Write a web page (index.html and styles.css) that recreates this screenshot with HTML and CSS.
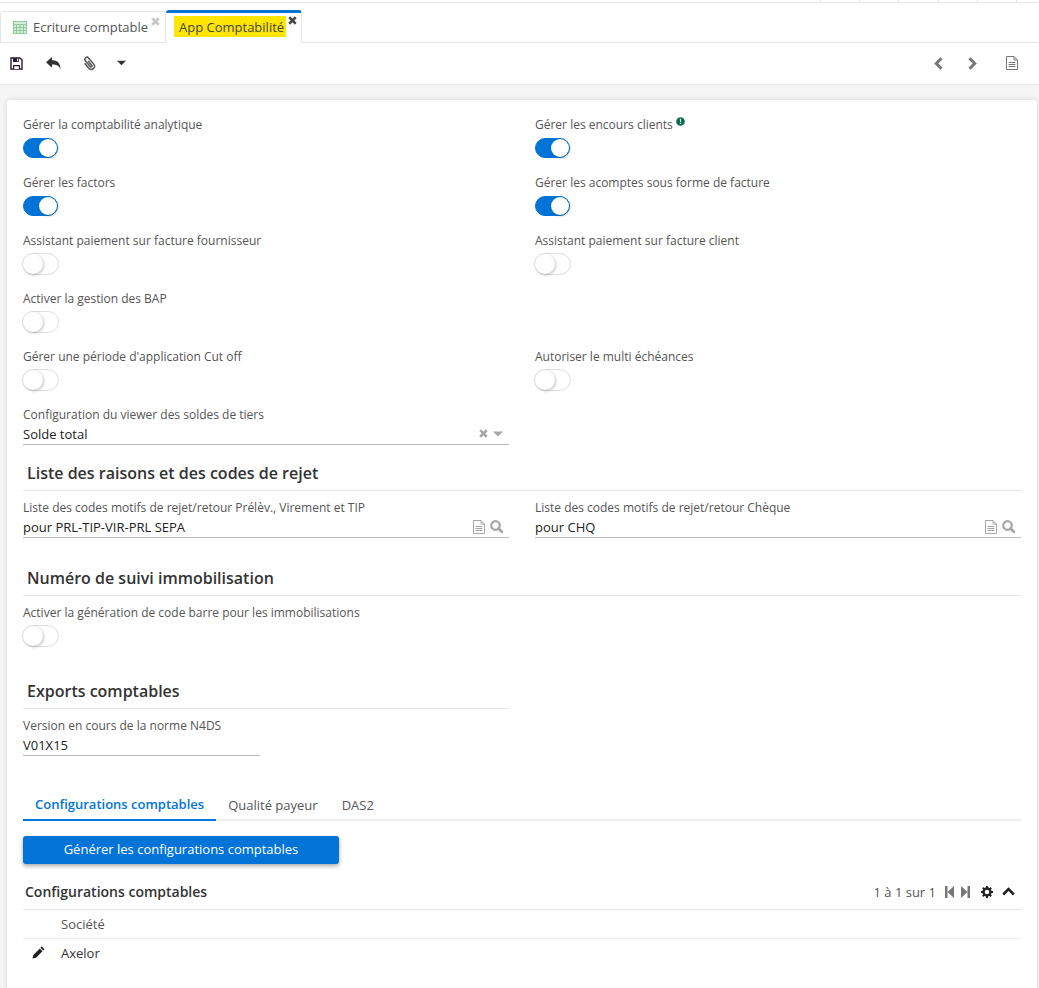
FILE: index.html
```html
<!DOCTYPE html>
<html lang="fr">
<head>
    <meta charset="UTF-8">
    <meta name="viewport" content="width=device-width, initial-scale=1.0">
    <title>App Comptabilité</title>
    <link rel="stylesheet" href="styles.css">
</head>
<body>
    <!-- icon sprite -->
    <svg class="sprite" xmlns="http://www.w3.org/2000/svg">
        <symbol id="i-times" viewBox="0 0 10 10"><path d="M2.400 .4 5 3 7.600 .4 9.600 2.400 7 5l2.600 2.600-2 2L5 7 2.400 9.600l-2-2L3 5 .4 2.400z"/></symbol>
        <symbol id="i-caret" viewBox="0 0 10 6"><path d="M0 .5h10L5 5.500z"/></symbol>
        <symbol id="i-file" viewBox="0 0 12 14"><path fill="none" stroke="currentColor" d="M.5.5h7.500l3.500 3.500v9.500H.5zM8 .5V4h3.500"/><path fill="none" stroke="currentColor" d="M2.500 6.500h7M2.500 8.500h7M2.500 10.500h7"/></symbol>
        <symbol id="i-search" viewBox="0 0 13 13"><circle cx="5.500" cy="5.500" r="4.300" fill="none" stroke="currentColor" stroke-width="2.200"/><path d="M8.500 8.500 12 12" stroke="currentColor" stroke-width="2.800" stroke-linecap="round"/></symbol>
    </svg>

    <div class="top-strip">
        <span></span><span></span><span></span><span></span><span></span><span class="last"></span>
    </div>

    <nav class="view-tabs">
        <div class="view-tab">
            <svg class="tab-icon" viewBox="0 0 14 13"><path fill="#d5ecd8" d="M0 0h14v13H0z"/><path fill="none" stroke="#8fca9a" d="M.5.5h13v12H.5zM.5 3.500h13M.5 6.500h13M.5 9.500h13M3.500 3.500v9M7 3.500v9M10.500 3.500v9"/></svg>
            <span class="tab-text">Ecriture comptable</span>
            <svg class="tab-close"><use href="#i-times"/></svg>
        </div>
        <div class="view-tab active">
            <span class="tab-text">App Comptabilité</span>
            <svg class="tab-close"><use href="#i-times"/></svg>
        </div>
    </nav>

    <div class="toolbar">
        <div class="toolbar-left">
            <svg class="tool-icon save" viewBox="0 0 13 13"><path fill="none" stroke="#2a1a33" stroke-width="1.400" d="M1 1h9l2 2v9H1z"/><path fill="#2a1a33" d="M3 1h6v4H3zM3 8h7v4H3z"/><path fill="#fff" d="M7 1.800h1.200v2.400H7zM4.200 9.200h4.600V12H4.200z"/></svg>
            <svg class="tool-icon reply" viewBox="0 0 15 13"><path fill="#333" d="M6 0v3.200c5 0 8.500 2.300 8.500 9.300-1.400-3.800-4-5-8.500-5v3.300L0 5.300z"/></svg>
            <svg class="tool-icon clip" viewBox="0 0 14 15"><g transform="rotate(-40 7 7.500)"><path fill="none" stroke="#555" stroke-width="1.500" d="M3.800 4.500v6.500a3.200 3.200 0 0 0 6.400 0V3a2.100 2.100 0 0 0-4.200 0v7.500a1 1 0 0 0 2 0V5"/></g></svg>
            <svg class="tool-caret"><use href="#i-caret"/></svg>
        </div>
        <div class="toolbar-right">
            <svg class="tool-nav" viewBox="0 0 9 13"><path fill="none" stroke="#777" stroke-width="3" d="M7.500 1.200 2.300 6.500l5.200 5.300"/></svg>
            <svg class="tool-nav" viewBox="0 0 9 13"><path fill="none" stroke="#777" stroke-width="3" d="M1.500 1.200l5.200 5.300-5.200 5.300"/></svg>
            <svg class="tool-file"><use href="#i-file"/></svg>
        </div>
    </div>

    <main class="content">
        <section class="card">
            <div class="form-grid">
                <div class="field">
                    <label>Gérer la comptabilité analytique</label>
                    <span class="switch on"></span>
                </div>
                <div class="field">
                    <label>Gérer les encours clients
                        <svg class="help-dot" viewBox="0 0 9 9"><circle cx="4.500" cy="4.500" r="4.300" fill="#0b6e4f"/><path fill="#fff" d="M3.900 1.800h1.200l-.2 3.300H4.100zM3.900 5.800h1.200v1.300H3.900z"/></svg>
                    </label>
                    <span class="switch on"></span>
                </div>
                <div class="field">
                    <label>Gérer les factors</label>
                    <span class="switch on"></span>
                </div>
                <div class="field">
                    <label>Gérer les acomptes sous forme de facture</label>
                    <span class="switch on"></span>
                </div>
                <div class="field">
                    <label>Assistant paiement sur facture fournisseur</label>
                    <span class="switch"></span>
                </div>
                <div class="field">
                    <label>Assistant paiement sur facture client</label>
                    <span class="switch"></span>
                </div>
                <div class="field">
                    <label>Activer la gestion des BAP</label>
                    <span class="switch"></span>
                </div>
                <div class="field"></div>
                <div class="field">
                    <label>Gérer une période d'application Cut off</label>
                    <span class="switch"></span>
                </div>
                <div class="field">
                    <label>Autoriser le multi échéances</label>
                    <span class="switch"></span>
                </div>
                <div class="field input-field">
                    <label>Configuration du viewer des soldes de tiers</label>
                    <div class="input-line">
                        <span>Solde total</span>
                        <span class="input-icons">
                            <svg class="ic-times"><use href="#i-times"/></svg>
                            <svg class="ic-caret"><use href="#i-caret"/></svg>
                        </span>
                    </div>
                </div>
            </div>

            <h2 class="section-title rejects">Liste des raisons et des codes de rejet</h2>
            <div class="form-grid">
                <div class="field input-field">
                    <label>Liste des codes motifs de rejet/retour Prélèv., Virement et TIP</label>
                    <div class="input-line">
                        <span>pour PRL-TIP-VIR-PRL SEPA</span>
                        <span class="input-icons">
                            <svg class="ic-file"><use href="#i-file"/></svg>
                            <svg class="ic-search"><use href="#i-search"/></svg>
                        </span>
                    </div>
                </div>
                <div class="field input-field">
                    <label>Liste des codes motifs de rejet/retour Chèque</label>
                    <div class="input-line">
                        <span>pour CHQ</span>
                        <span class="input-icons">
                            <svg class="ic-file"><use href="#i-file"/></svg>
                            <svg class="ic-search"><use href="#i-search"/></svg>
                        </span>
                    </div>
                </div>
            </div>

            <h2 class="section-title tracking">Numéro de suivi immobilisation</h2>
            <div class="field">
                <label>Activer la génération de code barre pour les immobilisations</label>
                <span class="switch"></span>
            </div>

            <h2 class="section-title half">Exports comptables</h2>
            <div class="field input-field narrow">
                <label>Version en cours de la norme N4DS</label>
                <div class="input-line"><span>V01X15</span></div>
            </div>

            <div class="inner-tabs">
                <a class="inner-tab active">Configurations comptables</a>
                <a class="inner-tab">Qualité payeur</a>
                <a class="inner-tab">DAS2</a>
            </div>

            <button class="primary-btn" type="button">Générer les configurations comptables</button>

            <div class="panel-head">
                <h3>Configurations comptables</h3>
                <div class="pager">
                    <span>1 à 1 sur 1</span>
                    <svg class="pager-step" viewBox="0 0 9 12"><path fill="#777" d="M0 0h2.500v12H0zM9 0v12L2.500 6z"/></svg>
                    <svg class="pager-step" viewBox="0 0 9 12"><path fill="#777" d="M9 0H6.500v12H9zM0 0v12l6.500-6z"/></svg>
                    <svg class="pager-cog" viewBox="0 0 12 12"><circle cx="6" cy="6" r="3.500" fill="none" stroke="#222" stroke-width="2.400"/><path stroke="#222" stroke-width="2" d="M6 0v2.500M6 9.500V12M0 6h2.500M9.500 6H12M1.800 1.800l1.800 1.800M8.400 8.400l1.800 1.800M1.800 10.200l1.800-1.800M8.400 3.600l1.800-1.800"/></svg>
                    <svg class="pager-up" viewBox="0 0 13 9"><path fill="none" stroke="#222" stroke-width="2.600" d="M1.200 7.500 6.500 2.200l5.300 5.300"/></svg>
                </div>
            </div>
            <div class="grid-row grid-header"><span class="grid-edit"></span><span>Société</span></div>
            <div class="grid-row grid-body">
                <span class="grid-edit">
                    <svg viewBox="0 0 12 12"><path fill="#222" d="M9 .5 11.500 3l-1.200 1.200-2.500-2.500zM7.200 2.300l2.500 2.500-6 6L.4 11.600l.8-3.300z"/></svg>
                </span>
                <span class="grid-value">Axelor</span>
            </div>
        </section>
    </main>
</body>
</html>
```

FILE: styles.css
```css
* {
    box-sizing: border-box;
}

html, body {
    height: 988px;
    overflow: hidden;
}

body {
    margin: 0;
    font-family: 'Open Sans', sans-serif;
    font-size: 13px;
    color: #333;
    background-color: #fff;
}

.sprite {
    display: none;
}

/* top strip */
.top-strip {
    height: 3px;
    display: flex;
    justify-content: flex-end;
    border-bottom: 1px solid #e9e9e9;
}

.top-strip span {
    width: 39.200px;
    border-left: 1px solid #e6e6e6;
}

.top-strip .last {
    width: 23px;
}

/* view tabs */
.view-tabs {
    height: 40px;
    display: flex;
    align-items: flex-end;
    border-bottom: 1px solid #e8e8e8;
}

.view-tab {
    position: relative;
    height: 32px;
    display: flex;
    align-items: center;
    margin-bottom: -1px;
    border: 1px solid #e6e6e6;
    border-radius: 3px 3px 0 0;
    background-color: #fff;
    color: #555;
    font-size: 13px;
}

.view-tab:first-child {
    width: 166px;
    padding-left: 12px;
}

.view-tab.active {
    width: 136px;
    height: 33px;
    padding: 0 0 2px 8px;
    border-top: 3px solid #0274d8;
    border-bottom-color: #fff;
    border-left: none;
}

.tab-icon {
    width: 14px;
    height: 13px;
    margin-right: 6px;
}

.view-tab.active .tab-text {
    height: 21px;
    padding: 0 2px 0 5px;
    line-height: 22px;
    background-color: #ffe600;
    color: #444;
}

.tab-close {
    position: absolute;
    top: 5px;
    right: 5px;
    width: 9px;
    height: 9px;
    fill: #c4c4c4;
}

.view-tab.active .tab-close {
    top: 3px;
    right: 4px;
    fill: #444;
}

/* toolbar */
.toolbar {
    height: 42px;
    display: flex;
    justify-content: space-between;
    align-items: center;
    padding: 0 21px 1px 10px;
    border-bottom: 1px solid #e9e9e9;
}

.toolbar-left,
.toolbar-right {
    display: flex;
    align-items: center;
}

.tool-icon.save {
    width: 13px;
    height: 13px;
}

.tool-icon.reply {
    width: 15px;
    height: 13px;
    margin-left: 23px;
}

.tool-icon.clip {
    width: 14px;
    height: 15px;
    margin-left: 21px;
}

.tool-caret {
    width: 9px;
    height: 6px;
    margin-left: 21px;
    fill: #333;
}

.tool-nav {
    width: 9px;
    height: 13px;
    margin-right: 25px;
}

.tool-file {
    width: 12px;
    height: 14px;
    margin-left: 4px;
    color: #777;
}

/* page body */
.content {
    height: 904px;
    padding: 15px 2px 0 7px;
    background-color: #f5f5f5;
}

.card {
    height: 900px;
    padding: 17px 16px 0;
    background-color: #fff;
    border-radius: 4px;
    box-shadow: 0 0 6px rgba(0, 0, 0, 0.12);
}

.form-grid {
    display: grid;
    grid-template-columns: 486px 486px;
    column-gap: 26px;
}

.field {
    height: 58px;
}

.field label {
    display: block;
    height: 16px;
    font-size: 12px;
    line-height: 16px;
    color: #555;
}

.help-dot {
    width: 9px;
    height: 9px;
    vertical-align: top;
}

/* toggle switch */
.switch {
    position: relative;
    display: block;
    width: 37px;
    height: 22px;
    margin: 4px 0 0 -1px;
    border: 1px solid #dfdfdf;
    border-radius: 11px;
    background-color: #fff;
}

.switch::after {
    content: "";
    position: absolute;
    top: 0;
    left: 0;
    width: 20px;
    height: 20px;
    border-radius: 50%;
    background-color: #fff;
    box-shadow: 1px 1px 3px rgba(0, 0, 0, 0.25);
}

.switch.on {
    width: 35px;
    height: 20px;
    margin: 5px 0 0;
    border-color: #0274d8;
    background-color: #0274d8;
}

.switch.on::after {
    left: 15px;
    width: 18px;
    height: 18px;
}

/* text inputs */
.input-field {
    height: 50px;
}

.input-line {
    height: 22px;
    display: flex;
    justify-content: space-between;
    align-items: center;
    border-bottom: 1px solid #bbb;
    font-size: 13px;
    color: #222;
}

.narrow {
    width: 237px;
}

.input-icons {
    display: flex;
    align-items: center;
    gap: 5px;
    padding-right: 6px;
    color: #a6a6a6;
}

.ic-times {
    width: 9px;
    height: 9px;
    fill: #a6a6a6;
}

.ic-caret {
    width: 10px;
    height: 6px;
    fill: #a6a6a6;
}

.ic-file {
    width: 12px;
    height: 14px;
}

.ic-search {
    width: 13px;
    height: 13px;
}

/* section headings */
.section-title {
    height: 34px;
    margin: 0 0 9px;
    padding: 6px 0 0 4px;
    border-bottom: 1px solid #e6e6e6;
    font-size: 16px;
    font-weight: 600;
    line-height: 20px;
    color: #333;
}

.section-title.tracking {
    margin-top: 12px;
}

.section-title.half {
    width: 486px;
    margin-top: 12px;
}

/* lower tabs */
.inner-tabs {
    display: flex;
    height: 32px;
    margin-top: 21px;
    border-bottom: 2px solid #eee;
}

.inner-tab {
    height: 32px;
    padding: 7px 12px 0;
    font-size: 13px;
    line-height: 18px;
    color: #555;
}

.inner-tab.active {
    padding-top: 6px;
    border-bottom: 2px solid #0274d8;
    color: #0274d8;
    font-weight: 600;
}

.primary-btn {
    display: block;
    width: 316px;
    height: 28px;
    margin-top: 15px;
    padding: 0 0 2px;
    border: none;
    border-radius: 3px;
    background-color: #0274d8;
    box-shadow: 0 2px 4px rgba(0, 0, 0, 0.35);
    font-family: inherit;
    font-size: 13px;
    font-weight: 500;
    color: #fff;
}

/* grid panel */
.panel-head {
    display: flex;
    justify-content: space-between;
    align-items: center;
    height: 46px;
    padding: 10px 6px 0 2px;
    border-bottom: 1px solid #e6e6e6;
}

.panel-head h3 {
    margin: 0;
    font-size: 14px;
    font-weight: 600;
    color: #333;
}

.pager {
    display: flex;
    align-items: center;
    font-size: 13px;
    color: #555;
}

.pager-step {
    width: 9px;
    height: 12px;
    margin-left: 7px;
}

.pager span + .pager-step {
    margin-left: 9px;
}

.pager-cog {
    width: 12px;
    height: 12px;
    margin-left: 11px;
}

.pager-up {
    width: 13px;
    height: 9px;
    margin-left: 9px;
}

.grid-row {
    display: flex;
    align-items: center;
    height: 29px;
    font-size: 13px;
    color: #222;
}

.grid-header {
    border-bottom: 1px solid #eee;
    color: #555;
}

.grid-body {
    padding-bottom: 2px;
}

.grid-edit {
    display: flex;
    width: 38px;
    padding-left: 9px;
}

.grid-edit svg {
    width: 13px;
    height: 13px;
}

.grid-value {
    color: #333;
}
```
